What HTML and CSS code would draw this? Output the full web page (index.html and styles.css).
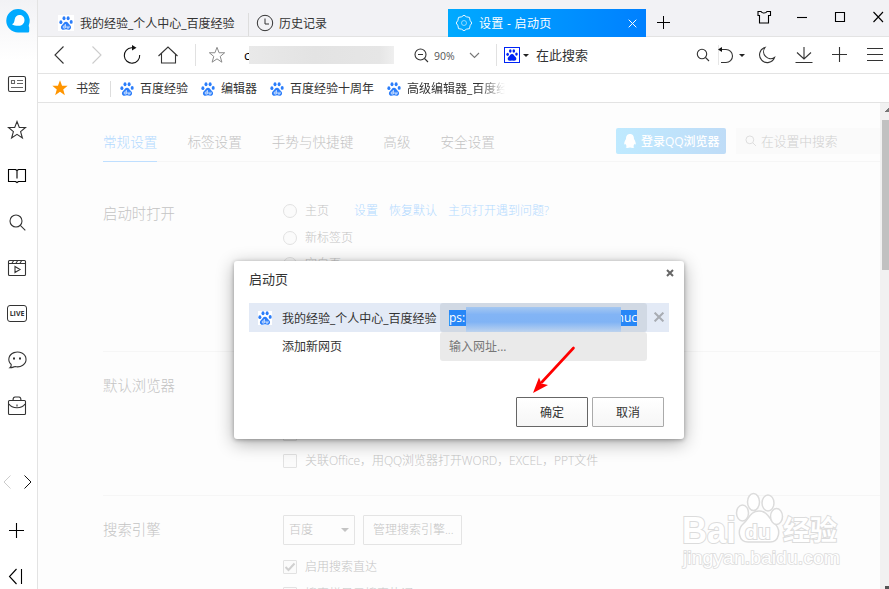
FILE: index.html
```html
<!DOCTYPE html>
<html lang="zh-CN">
<head>
    <meta charset="UTF-8">
    <meta name="viewport" content="width=device-width, initial-scale=1.0">
    <title>设置 - 启动页</title>
    <link rel="stylesheet" href="styles.css">
</head>
<body>

    <svg class="defs">
        <symbol id="paw" viewBox="0 0 14 14">
            <g fill="currentColor">
                <ellipse cx="1.900" cy="6.200" rx="1.500" ry="1.900"/>
                <ellipse cx="5" cy="2.300" rx="1.500" ry="2"/>
                <ellipse cx="9.100" cy="2.300" rx="1.500" ry="2"/>
                <ellipse cx="12.200" cy="5.900" rx="1.500" ry="1.900"/>
                <path d="M7 5.700c2 0 2.500 2 3.900 3.200 2.100 1.900 1.200 4.800-1.200 4.800-1 0-1.700-.4-2.700-.4s-1.700.4-2.700.4C1.900 13.700 1 10.800 3.100 8.900 4.500 7.700 5 5.700 7 5.700z"/>
            </g>
        </symbol>
        <symbol id="pawdu" viewBox="0 0 14 14">
            <use href="#paw"/>
            <path d="M6.300 8v4H4.800c-.9 0-.9-2 0-2h1.500M8 9.800V12h2V9.800" stroke="#fff" stroke-width=".8" fill="none"/>
        </symbol>
        <symbol id="find" viewBox="0 0 20 20">
            <circle cx="9" cy="9" r="6"/><path d="M13.300 13.300l5 5"/>
        </symbol>
        <symbol id="star" viewBox="0 0 20 20">
            <path d="M10 1.500l2.300 6h6.200l-4.900 4.100 1.800 6.400-5.400-3.700L4.600 18l1.800-6.400-4.900-4.100h6.200z"/>
        </symbol>
    </svg>

    <div class="browser">
        <!-- Barra lateral -->
        <div class="sidebar">
            <svg class="logo" viewBox="0 0 24 24"><path fill="#0af" d="M12 0a11.600 11.600 0 0 1 11 15.500c-.5 1.400-.2 2 .2 3v3.500c0 1-.6 1.500-1.600 1.500H12A11.700 11.700 0 0 1 12 0z"/><path fill="#fff" d="M13.500 6c2.800 0 5 2 5 5 0 3.500-2.500 5.800-6 5.800-2.800 0-5-.4-6.500-1.500 2-.8 2.300-2.500 2.700-4.800C9.200 7.700 11 6 13.500 6z"/></svg>
            <div class="apps">
                <svg class="icon" viewBox="0 0 20 20"><rect x="1.500" y="2.500" width="17" height="15" rx="1.500"/><path class="thin" d="M4.500 6.500h3v3h-3zM10 6.500h6M10 9.500h6M4 13.500h12"/></svg>
                <svg class="icon"><use href="#star"/></svg>
                <svg class="icon black" viewBox="0 0 20 20"><path d="M1.500 3.500h7l1.500 1 1.500-1h7v12h-7l-1.500 1-1.500-1h-7zM10 4.500v8"/></svg>
                <svg class="icon"><use href="#find"/></svg>
                <svg class="icon" viewBox="0 0 20 20"><rect x="1.500" y="2.500" width="17" height="15" rx="1"/><path d="M2 5.500h16M5 5l1.500-2M9 5l1.500-2M13 5l1.500-2M8 8.500l5 3-5 3z"/></svg>
                <div class="live">LIVE</div>
                <svg class="icon" viewBox="0 0 20 20"><path d="M4.200 14.500A8.600 7.400 0 1 1 8 16.500c-1.500.5-3 1.300-5 1.300 1-.8 1.400-1.900 1.200-3.300z"/><path stroke-width="2" d="M6 8.500h2M12 8.500h2"/></svg>
                <svg class="icon" viewBox="0 0 20 20"><rect x="1.500" y="4.500" width="17" height="14" rx="1"/><path d="M6 4.500c0-3 1-3.500 2-3.500h4c1 0 2 .5 2 3.500M2 8c3 5 13 5 16 0M10 8.500v2"/></svg>
            </div>
            <div class="arrows">
                <svg class="arrow off" viewBox="0 0 8 14"><path d="M7.500.500L1 7l6.500 6.500"/></svg>
                <svg class="arrow" viewBox="0 0 8 14"><path d="M.500.500L7 7l-6.500 6.500"/></svg>
            </div>
            <svg class="icon black add" viewBox="0 0 20 20"><path d="M10.500 2v15M3 9.500h15"/></svg>
            <svg class="icon black collapse" viewBox="0 0 20 20"><path d="M10.500 2L3.500 9.500l7 7.500M15.500 2v15"/></svg>
        </div>

        <div class="main">
            <!-- Abas -->
            <div class="tabs">
                <div class="tab first"><span class="favicon"><svg class="paw"><use href="#pawdu"/></svg></span><span>我的经验_个人中心_百度经验</span></div>
                <div class="tab second"><svg class="tabicon" viewBox="0 0 18 18"><circle cx="9" cy="9" r="7.700"/><path d="M9 4.500V10h4"/></svg><span>历史记录</span></div>
                <div class="tab active"><svg class="tabicon" viewBox="0 0 18 18"><path d="M9 1.200l2.400 1.600 3.100.6.600 3L16.800 9l-1.700 2.600-.6 3-3.100.6L9 16.800l-2.400-1.600-3.100-.6-.6-3L1.200 9l1.700-2.600.6-3 3.100-.6z"/><circle cx="9" cy="9" r="2.500" opacity=".6"/></svg><span>设置 - 启动页</span><svg class="close" viewBox="0 0 9 9"><path d="M.700.700l7.600 7.600M8.300.700L.700 8.300"/></svg></div>
                <svg class="newtab" viewBox="0 0 13 13"><path d="M6.500 0v13M0 6.500h13"/></svg>
                <div class="window">
                    <svg class="icon black" viewBox="0 0 20 20"><path d="M4 4.500h3c1 2 5 2 6 0h3.500v4H14.500v7.500h-9V8.500H4z"/></svg>
                    <svg class="icon black" viewBox="0 0 20 20"><path d="M5 10.500h10"/></svg>
                    <svg class="icon black" viewBox="0 0 20 20"><path d="M5.500 5.500h9v9h-9z"/></svg>
                    <svg class="icon black" viewBox="0 0 20 20"><path d="M5.500 5l9.500 10M15 5L5.500 15"/></svg>
                </div>
            </div>

            <!-- Barra de endereço -->
            <div class="toolbar">
                <svg class="icon" viewBox="0 0 20 20"><path d="M13.500 1.500L5 10l8.500 8.500"/></svg>
                <svg class="icon forward" viewBox="0 0 20 20"><path d="M5.500 1.500L14 10l-8.500 8.500"/></svg>
                <svg class="icon reload" viewBox="0 0 20 20"><path d="M12 2.800H9.500A7.700 7.700 0 1 0 17.700 10"/><path class="fill" d="M10 0l4.500 2.800-4.500 2.700z"/></svg>
                <svg class="icon home" viewBox="0 0 20 20"><path d="M.500 11L10 2l9.500 9M3.500 8.500v9.500h14V8.500"/></svg>
                <span class="divider nav"></span>
                <svg class="icon fav"><use href="#star"/></svg>
                <div class="url">c<span class="blur"></span></div>
                <svg class="icon zoom" viewBox="0 0 20 20"><circle cx="8.500" cy="9.500" r="5.500"/><path d="M12.500 13.500l3.500 3.500M6 9.500h5"/></svg>
                <span class="percent">90%</span>
                <svg class="icon down" viewBox="0 0 20 20"><path d="M5 8l4.500 4.500L14 8"/></svg>
                <span class="divider engine"></span>
                <span class="pawbox"><svg class="paw"><use href="#paw"/></svg></span>
                <span class="caret"></span>
                <span class="search">在此搜索</span>
                <div class="tools">
                    <svg class="icon" viewBox="0 0 20 20"><circle cx="9" cy="9" r="4.700"/><path d="M12.500 12.500l3.500 3.500"/></svg>
                    <svg class="icon undo" viewBox="0 0 20 20"><path d="M3 4.500h7a6 6 0 0 1 0 13H5"/><path class="fill" d="M2 4.500l4-2.500v5z"/></svg>
                    <span class="caret"></span>
                    <svg class="icon moon" viewBox="0 0 20 20"><path d="M8 2.500A7.700 7.700 0 1 0 17.500 12.500 7 7 0 0 1 8 2.500z"/></svg>
                    <svg class="icon load" viewBox="0 0 20 20"><path d="M10 2v12M3 7.500l7 6.500 7-6.500M1.500 17.500h17"/></svg>
                    <svg class="icon plus" viewBox="0 0 20 20"><path d="M9.500 2v15M2 9.500h15"/></svg>
                    <svg class="icon menu" viewBox="0 0 20 20"><path d="M2 3.500h16M2 9.500h16M2 15.500h16"/></svg>
                </div>
            </div>

            <!-- Favoritos -->
            <div class="bookmarks">
                <svg class="gold"><use href="#star"/></svg>
                <span class="label">书签</span>
                <span class="bookmark"><svg class="paw"><use href="#pawdu"/></svg>百度经验</span>
                <span class="bookmark"><svg class="paw"><use href="#pawdu"/></svg>编辑器</span>
                <span class="bookmark"><svg class="paw"><use href="#pawdu"/></svg>百度经验十周年</span>
                <span class="bookmark last"><svg class="paw"><use href="#pawdu"/></svg>高级编辑器_百度经</span>
            </div>

            <!-- Página de configurações -->
            <div class="content">
                <div class="page">
                    <div class="menu-top">
                        <span class="item current">常规设置</span>
                        <span class="item">标签设置</span>
                        <span class="item">手势与快捷键</span>
                        <span class="item">高级</span>
                        <span class="item">安全设置</span>
                        <span class="login"><svg class="penguin" viewBox="0 0 12 14"><path fill="#fff" d="M6 0c3 0 4 2.200 4 5 1 1.500 2 3.500 1.700 5.200-.4.500-.9-.2-1.200-.5-.2 1-.6 1.700-1.200 2.300l1 1.500c-1 .6-2.800.5-4.300 0-1.500.5-3.300.6-4.300 0l1-1.500c-.6-.6-1-1.300-1.200-2.300-.3.300-.8 1-1.200.5C0 8.500 1 6.500 2 5c0-2.800 1-5 4-5z"/></svg><span>登录QQ浏览器</span></span>
                        <span class="filter"><svg class="glass"><use href="#find"/></svg>在设置中搜索</span>
                    </div>

                    <div class="section startup">
                        <h2>启动时打开</h2>
                        <div class="options">
                            <div class="option"><i class="radio"></i>主页<span class="links"><a>设置</a><a>恢复默认</a><a>主页打开遇到问题?</a></span></div>
                            <div class="option"><i class="radio"></i>新标签页</div>
                            <div class="option"><i class="radio"></i>空白页</div>
                        </div>
                    </div>

                    <div class="section default">
                        <h2>默认浏览器</h2>
                        <div class="options">
                            <div class="option"><i class="check"></i></div>
                            <div class="option office"><i class="check"></i>关联Office，用QQ浏览器打开WORD，EXCEL，PPT文件</div>
                        </div>
                    </div>

                    <div class="section engines">
                        <h2>搜索引擎</h2>
                        <div class="options">
                            <div class="controls"><span class="select">百度<span class="caret"></span></span><span class="manage">管理搜索引擎...</span></div>
                            <div class="option"><i class="check"><svg class="tick" viewBox="0 0 12 12"><path d="M1.500 6l3 3 6-6.500"/></svg></i>启用搜索直达</div>
                            <div class="option"><i class="check"></i>搜索栏显示搜索热词</div>
                        </div>
                    </div>
                </div>
                <div class="scrollbar"><span class="up"></span><div class="thumb"></div><span class="bottom"></span></div>
            </div>
        </div>
    </div>

    <svg class="watermark" viewBox="0 0 170 90">
        <g>
            <path d="M82 24c8 0 10 7 15 12 8 7 5 19-4 19H71c-9 0-12-12-4-19 5-5 7-12 15-12z"/>
            <ellipse cx="65.500" cy="26" rx="6" ry="8"/>
            <ellipse cx="76.500" cy="15" rx="6" ry="8.500"/>
            <ellipse cx="91" cy="16" rx="6" ry="8"/>
            <ellipse cx="99.500" cy="29.500" rx="6" ry="8"/>
        </g>
        <text class="wm-big" x="5" y="56" textLength="54" lengthAdjust="spacingAndGlyphs">Bai</text>
        <text class="wm-du" x="68" y="52">du</text>
        <text class="wm-cn" x="106" y="53">经验</text>
        <text class="wm-site" x="6" y="77" textLength="157" lengthAdjust="spacingAndGlyphs">jingyan.baidu.com</text>
    </svg>

    <!-- Janela de página inicial -->
    <div class="dialog">
        <div class="head"><span>启动页</span><svg class="x" viewBox="0 0 8 8"><path d="M1 1l6 6M7 1L1 7"/></svg></div>
        <div class="row selected">
            <span class="favicon"><svg class="paw"><use href="#pawdu"/></svg></span>
            <span class="name">我的经验_个人中心_百度经验</span>
            <div class="address"><div class="marked"><span>ps:</span><span class="end">nuc</span></div><div class="haze"></div></div>
            <svg class="x" viewBox="0 0 8 8"><path d="M.500.500l7 7M7.500.500l-7 7"/></svg>
        </div>
        <div class="row">
            <span class="favicon empty"></span>
            <span class="name">添加新网页</span>
            <div class="address">输入网址...</div>
        </div>
        <div class="buttons">
            <button class="ok">确定</button>
            <button>取消</button>
        </div>
    </div>

    <svg class="pointer" viewBox="0 0 44 50"><path d="M41.500 3L10 37" stroke="#f00" stroke-width="2.600" stroke-linecap="round"/><path d="M1 48l6-15.500 2.500 6 6.500 1.500z" fill="#f00"/></svg>

</body>
</html>
```
FILE: styles.css
```css
* {
    box-sizing: border-box;
}
body {
    margin: 0;
    font-family: "Open Sans", "Noto Sans CJK SC", sans-serif;
    font-size: 12px;
    line-height: 16px;
    color: #333;
    background-color: #fff;
    overflow: hidden;
}
svg {
    display: block;
    flex: none;
    fill: none;
    stroke-width: 1;
}
.defs {
    width: 0;
    height: 0;
    position: absolute;
}
.browser {
    display: flex;
    width: 889px;
    height: 589px;
}
.icon {
    width: 20px;
    height: 20px;
    stroke: #333;
    stroke-width: 1.1;
}
.icon .fill {
    fill: #111;
    stroke: none;
}
.icon .thin {
    stroke: #666;
}
.black {
    stroke: #000;
}
.paw {
    width: 14px;
    height: 14px;
    color: #2a7dfa;
}
.caret {
    border: 3px solid transparent;
    border-top-color: #222;
    border-bottom: 0;
}

/* barra lateral */
.sidebar {
    width: 38px;
    border-right: 1px solid #e3e3e3;
    background: linear-gradient(#f2f2f5, #fff 60px);
    display: flex;
    flex-direction: column;
}
.logo {
    width: 24px;
    height: 24px;
    margin: 9px 0 28px 6px;
}
.apps {
    display: grid;
    grid-template-rows: repeat(8, 46px);
    align-items: center;
    padding-left: 7px;
}
.live {
    width: 20px;
    height: 17px;
    margin-top: -1px;
    border: 1px solid #333;
    border-radius: 3px;
    font-size: 7px;
    font-weight: bold;
    line-height: 15px;
    text-align: center;
}
.arrows {
    display: flex;
    justify-content: space-between;
    margin: 46px 5px 0 3px;
}
.arrow {
    width: 8px;
    height: 14px;
    stroke: #111;
}
.off {
    stroke: #ccc;
}
.add {
    margin: 32px 0 0 6px;
}
.collapse {
    margin: 26px 0 0 6px;
}

/* abas */
.main {
    width: 851px;
    display: flex;
    flex-direction: column;
}
.tabs {
    height: 37px;
    background-color: #f2f2f5;
    border-bottom: 1px solid #e3e3e3;
    display: flex;
    align-items: flex-end;
}
.tab {
    display: flex;
    align-items: center;
    height: 28px;
    margin-bottom: -1px;
    white-space: nowrap;
}
.tab > span:not(.favicon) {
    padding-top: 2px;
}
.first {
    width: 211px;
    padding-left: 20px;
    background: linear-gradient(#ddd, #ddd) right 4px/1px 23px no-repeat;
}
.favicon {
    width: 16px;
    height: 16px;
    padding: 1px;
    background-color: #fff;
}
.first .favicon {
    margin-right: 6px;
}
.tabicon {
    width: 18px;
    height: 18px;
    stroke: currentColor;
    margin-right: 5px;
}
.second {
    width: 199px;
    padding-left: 7px;
}
.active {
    width: 198px;
    padding: 0 9px 0 7px;
    color: #fff;
    background: linear-gradient(90deg, #00aaff, #0080ff);
}
.active .tabicon {
    margin-right: 6px;
    stroke-width: .9;
}
.active span {
    letter-spacing: .3px;
}
.close {
    width: 9px;
    height: 9px;
    margin-left: auto;
    stroke: #fff;
}
.newtab {
    width: 13px;
    height: 13px;
    margin: 0 0 7px 11px;
    stroke: #000;
}
.window {
    display: flex;
    gap: 18px;
    margin: 0 1px 9px auto;
}

/* barra de endereço */
.toolbar {
    height: 37px;
    padding: 0 4px 0 12px;
    border-bottom: 1px solid #e3e3e3;
    display: flex;
    align-items: center;
}
.toolbar > * {
    flex: none;
}
.forward {
    margin-left: 17px;
    stroke: #ccc;
}
.reload {
    margin-left: 15px;
    stroke: #111;
}
.home {
    margin-left: 16px;
}
.divider {
    width: 1px;
    height: 22px;
    background-color: #e1e1e1;
}
.nav {
    margin-left: 17px;
}
.fav {
    width: 18px;
    height: 18px;
    margin: 0 1px 0 12px;
    stroke: #888;
}
.url {
    width: 150px;
    margin-left: 17px;
    font-size: 13px;
    color: #000;
    display: flex;
    align-items: center;
}
.blur {
    flex: 1;
    height: 18px;
    margin-left: -1px;
    background: linear-gradient(90deg, #e9e9e9, #e3e3e3 45%, #e6e6e6 90%, #efefef);
}
.zoom {
    margin-left: 18px;
}
.percent {
    width: 31px;
    margin-left: 2px;
    padding-top: 1px;
    font-size: 10.500px;
    color: #555;
}
.down {
    stroke: #777;
}
.engine {
    margin-left: 11px;
}
.pawbox {
    width: 16px;
    height: 16px;
    margin: 0 3px 0 7px;
    padding: 1px;
    border: 1px solid #0024f5;
}
.pawbox .paw {
    width: 12px;
    height: 12px;
    color: #0024f5;
}
.search {
    margin-left: 7px;
    font-size: 13px;
}
.tools {
    display: flex;
    align-items: center;
    margin-left: auto;
}
.undo {
    margin: 0 3px;
    background: linear-gradient(#e6e6e6, #e6e6e6) 2px 0/1px 20px no-repeat;
}
.moon {
    margin-left: 12px;
}
.load {
    margin-left: 17px;
}
.plus {
    margin-left: 16px;
}
.menu {
    margin-left: 15px;
}

/* favoritos */
.bookmarks {
    height: 29px;
    padding: 2px 0 0 13px;
    border-bottom: 1px solid #e3e3e3;
    display: flex;
    align-items: center;
}
.gold {
    width: 18px;
    height: 18px;
    margin-top: -2px;
    fill: #ff9500;
}
.label {
    width: 35px;
    margin: 0 9px 0 7px;
    border-right: 1px solid #ddd;
}
.bookmark {
    display: flex;
    align-items: center;
    gap: 6px;
    margin-right: 13px;
    white-space: nowrap;
}
.last {
    -webkit-mask-image: linear-gradient(90deg, #000 92px, transparent 118px);
    mask-image: linear-gradient(90deg, #000 92px, transparent 118px);
}

/* configurações */
.content {
    height: 486px;
    display: flex;
    overflow: hidden;
    background-color: #fdfdfd;
    color: #c4c4c4;
    font-weight: 300;
}
.page {
    width: 842px;
    padding-left: 65px;
}
.menu-top {
    height: 59px;
    border-bottom: 1px solid #f6f6f6;
    display: flex;
    align-items: center;
    font-size: 13.600px;
    white-space: nowrap;
}
.item {
    height: 59px;
    margin-right: 30px;
    padding-top: 31px;
}
.item:nth-child(5) {
    margin-right: 121px;
}
.current {
    color: #b4daff;
    border-bottom: 1px solid #bfdfff;
}
.login {
    width: 110px;
    height: 26px;
    margin: 17px 10px 0 0;
    padding-left: 8px;
    border-radius: 2px;
    display: flex;
    align-items: center;
    gap: 5px;
    font-size: 12px;
    font-weight: 500;
    color: #fff;
    background: linear-gradient(90deg, #bfeaff, #bfdcf7);
}
.login span {
    padding-top: 2px;
}
.penguin {
    width: 12px;
    height: 14px;
}
.filter {
    flex: 1;
    height: 26px;
    margin-top: 17px;
    padding-left: 8px;
    display: flex;
    align-items: center;
    gap: 4px;
    font-size: 12.800px;
    color: #d0d0d0;
    background-color: #fafafa;
}
.glass {
    width: 13px;
    height: 13px;
    stroke: #ddd;
    stroke-width: 1.500;
}
.section {
    display: flex;
    border-bottom: 1px solid #f6f6f6;
}
.section h2 {
    width: 180px;
    margin: 0;
    padding-top: 44px;
    font-size: 14.400px;
    font-weight: 300;
}
.startup {
    height: 190px;
}
.startup .options {
    padding-top: 36px;
}
.default {
    height: 144px;
}
.section.default h2,
.section.engines h2 {
    padding-top: 26px;
}
.default .options {
    padding-top: 69px;
}
.engines {
    height: 150px;
}
.engines .options {
    padding-top: 19px;
}
.option {
    height: 26.500px;
    display: flex;
    align-items: center;
    white-space: nowrap;
}
.office {
    letter-spacing: -.05px;
}
.radio,
.check {
    width: 14px;
    height: 14px;
    margin-right: 8px;
    border: 1px solid #e2e2e2;
    background-color: #fbfbfb;
}
.radio {
    border-radius: 50%;
}
.check {
    border-radius: 1px;
}
.tick {
    width: 12px;
    height: 12px;
    stroke: #d0d0d0;
    stroke-width: 2;
}
.links {
    display: flex;
    gap: 11px;
    margin-left: 25px;
    color: #b4daff;
}
.controls {
    display: flex;
    gap: 8px;
    margin-bottom: 9px;
}
.select,
.manage {
    height: 30px;
    border: 1px solid #e4e4e4;
    border-radius: 1px;
    display: flex;
    align-items: center;
    white-space: nowrap;
}
.select {
    width: 72px;
    padding: 0 5px;
    justify-content: space-between;
}
.select .caret {
    border-width: 4px;
    border-bottom: 0;
    border-top-color: #c4c4c4;
}
.manage {
    width: 99px;
    padding-left: 9px;
}
.scrollbar {
    width: 9px;
    padding: 4px 0 0 2px;
    background-color: #f1f1f1;
    display: flex;
    flex-direction: column;
}
.up {
    height: 13px;
    background: linear-gradient(135deg, transparent 50%, #777 50%) right 5px/5px 4px no-repeat;
    margin-top: -4px;
    margin-bottom: 4px;
}
.thumb {
    height: 150px;
    background-color: #c1c1c1;
}
.bottom {
    height: 3px;
    width: 4px;
    margin: auto 0 0 3px;
    background-color: #555;
}

/* marca d'água */
.watermark {
    position: absolute;
    left: 677px;
    top: 487px;
    width: 170px;
    height: 90px;
    fill: #fff;
    stroke: #dcdcdc;
    stroke-width: 1.500;
}
.watermark text {
    font-family: "Liberation Sans", "Noto Sans CJK SC", sans-serif;
    paint-order: stroke;
    stroke-width: 2;
}
.wm-big {
    font-size: 37px;
    font-weight: bold;
}
.wm-du {
    font-size: 21px;
    font-weight: bold;
}
.wm-cn {
    font-size: 27px;
    font-weight: bold;
}
.watermark .wm-site {
    font-size: 19px;
    stroke-width: 1.600;
}

/* janela */
.dialog {
    position: absolute;
    left: 234px;
    top: 261px;
    width: 450px;
    height: 178px;
    padding: 0 15px;
    border-radius: 3px;
    background-color: #fff;
    box-shadow: 0 4px 18px rgba(0, 0, 0, 0.32), 0 1px 4px rgba(0, 0, 0, 0.3);
}
.head {
    height: 42px;
    margin-right: -5px;
    padding-top: 8px;
    display: flex;
    justify-content: space-between;
    font-size: 13px;
    line-height: 20px;
}
.x {
    width: 8px;
    height: 8px;
    stroke: #666;
    stroke-width: 2;
}
.row {
    height: 29px;
    width: 420px;
    display: flex;
    align-items: center;
    white-space: nowrap;
}
.selected {
    background-color: #e3eaf6;
}
.selected .x {
    width: 10px;
    height: 10px;
    margin: 0 0 1px 7px;
    stroke: #a8acb3;
    stroke-width: 1.600;
}
.row .favicon {
    width: 14px;
    height: 14px;
    margin-left: 9px;
    padding: 0;
    flex: none;
}
.row .name {
    width: 158px;
    margin-left: 10px;
}
.selected .name {
    padding-top: 2px;
}
.row .address {
    position: relative;
    width: 207px;
    height: 29px;
    padding: 7px 9px;
    border-radius: 3px;
    color: #777;
    background-color: #eaeaea;
}
.selected .address {
    background-color: #d1d9e4;
}
.marked {
    width: 188px;
    display: flex;
    justify-content: space-between;
    color: #fff;
    font-weight: 500;
    background-color: #2787f7;
}
.haze {
    position: absolute;
    left: 26px;
    top: 4px;
    width: 155px;
    height: 25px;
    background: linear-gradient(#a5c7f1, #82b4f5 30%, #80b3f5 60%, #bdd3ee);
}
.buttons {
    display: flex;
    gap: 4px;
    justify-content: flex-end;
    margin: 36px 5px 0 0;
}
button {
    width: 72px;
    height: 30px;
    padding: 1px 0 0;
    border: 1px solid #aaa;
    border-radius: 1px;
    font: inherit;
    color: #333;
    background: linear-gradient(#fff, #f6f6f6);
}
.ok {
    border-color: #666;
}
.pointer {
    position: absolute;
    left: 532px;
    top: 345px;
    width: 44px;
    height: 50px;
}
```
